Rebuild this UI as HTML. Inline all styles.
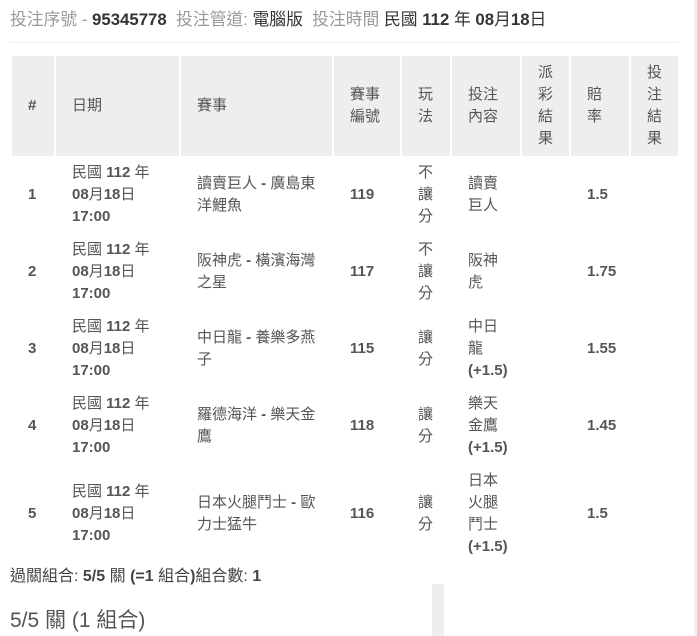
<!DOCTYPE html>
<html><head><meta charset="utf-8"><style>
body{margin:0;background:#fff;font-family:"Liberation Sans","Noto Sans CJK TC",sans-serif;color:#555;font-size:15px;width:697px;height:636px;overflow:hidden;position:relative}
.top{position:absolute;left:10px;top:6px;font-size:16.8px;color:#999;white-space:nowrap}
.top b{color:#333}
.top span{color:#333}
.hr{position:absolute;left:10px;top:42px;width:668px;height:1px;background:#eee}
table{position:absolute;left:10px;top:54px;border-collapse:separate;border-spacing:2px;table-layout:fixed;width:670px}
th{background:#eee;font-weight:normal;text-align:left;padding:6px 2px 6px 16px;line-height:22px;height:88px;vertical-align:middle;color:#555}
td{padding:4px 2px 5px 16px;line-height:22px;vertical-align:middle;color:#555;white-space:nowrap}
.b{font-weight:bold}
.sum{position:absolute;left:10px;top:562px;font-size:16px;color:#444}
.sum b{font-weight:bold}
.h2{position:absolute;left:10px;top:604px;font-size:21px;color:#555}
.bar{position:absolute;left:432px;top:584px;width:12px;height:52px;background:#eee}
.rbar{position:absolute;left:694px;top:0;width:3px;height:636px;background:#f0f0f0}
</style></head><body>
<div class="top">投注序號 - <b>95345778</b>&nbsp; 投注管道: <span>電腦版</span>&nbsp; 投注時間 <span>民國 <b>112</b> 年 <b>08</b>月<b>18</b>日</span></div>
<div class="hr"></div>
<div class="rbar"></div>
<table>
<colgroup><col style="width:42px"><col style="width:123px"><col style="width:151px"><col style="width:66px"><col style="width:48px"><col style="width:68px"><col style="width:47px"><col style="width:58px"><col style="width:47px"></colgroup>
<tr><th class="b">#</th><th>日期</th><th>賽事</th><th>賽事<br>編號</th><th>玩<br>法</th><th>投注<br>內容</th><th>派<br>彩<br>結<br>果</th><th>賠<br>率</th><th>投<br>注<br>結<br>果</th></tr>
<tr><td class="b">1</td><td>民國 <b>112</b> 年<br><b>08</b>月<b>18</b>日<br><b>17:00</b></td><td>讀賣巨人 <b>-</b> 廣島東<br>洋鯉魚</td><td class="b">119</td><td>不<br>讓<br>分</td><td>讀賣<br>巨人</td><td></td><td class="b">1.5</td><td></td></tr>
<tr><td class="b">2</td><td>民國 <b>112</b> 年<br><b>08</b>月<b>18</b>日<br><b>17:00</b></td><td>阪神虎 <b>-</b> 橫濱海灣<br>之星</td><td class="b">117</td><td>不<br>讓<br>分</td><td>阪神<br>虎</td><td></td><td class="b">1.75</td><td></td></tr>
<tr><td class="b">3</td><td>民國 <b>112</b> 年<br><b>08</b>月<b>18</b>日<br><b>17:00</b></td><td>中日龍 <b>-</b> 養樂多燕<br>子</td><td class="b">115</td><td>讓<br>分</td><td>中日<br>龍<br><b>(+1.5)</b></td><td></td><td class="b">1.55</td><td></td></tr>
<tr><td class="b">4</td><td>民國 <b>112</b> 年<br><b>08</b>月<b>18</b>日<br><b>17:00</b></td><td>羅德海洋 <b>-</b> 樂天金<br>鷹</td><td class="b">118</td><td>讓<br>分</td><td>樂天<br>金鷹<br><b>(+1.5)</b></td><td></td><td class="b">1.45</td><td></td></tr>
<tr><td class="b">5</td><td>民國 <b>112</b> 年<br><b>08</b>月<b>18</b>日<br><b>17:00</b></td><td>日本火腿鬥士 <b>-</b> 歐<br>力士猛牛</td><td class="b">116</td><td>讓<br>分</td><td>日本<br>火腿<br>鬥士<br><b>(+1.5)</b></td><td></td><td class="b">1.5</td><td></td></tr>
</table>
<div class="sum">過關組合: <b>5/5</b> 關 <b>(=1</b> 組合<b>)</b>組合數: <b>1</b></div>
<div class="bar"></div>
<div class="h2">5/5 關 (1 組合)</div>
</body></html>
